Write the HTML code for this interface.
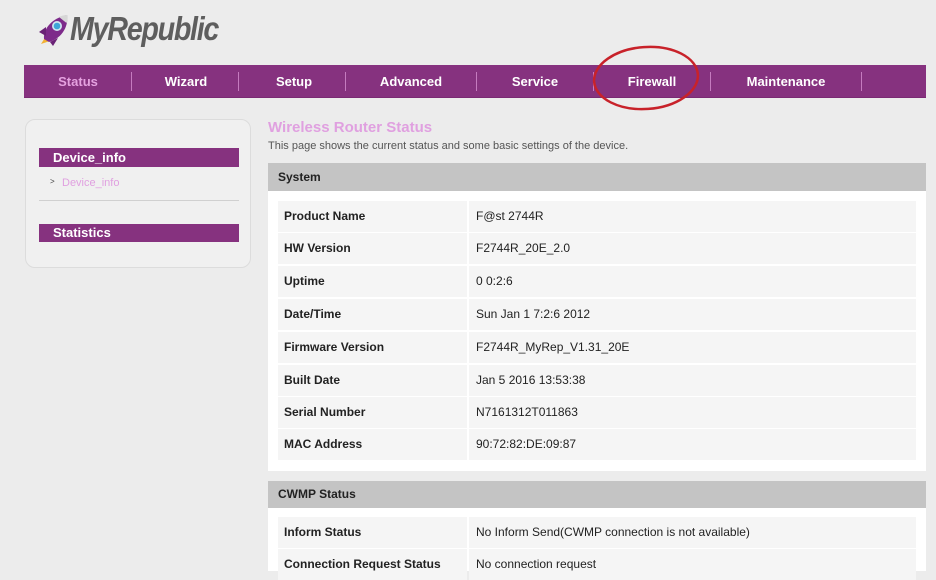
<!DOCTYPE html>
<html><head><meta charset="utf-8"><style>
*{margin:0;padding:0;box-sizing:border-box}
body{width:936px;height:566px;overflow:hidden;background:#ececec;font-family:"Liberation Sans",Arial,sans-serif;position:relative}
.abs{position:absolute}
.nav{left:24px;top:65px;width:902px;height:33px;background:#86327f;border-bottom:1px solid #7a2a73}
.nav span{position:absolute;top:0;line-height:33px;color:#fff;font-weight:bold;font-size:13px;transform:translateX(-50%)}
.sep{position:absolute;top:7px;width:1px;height:19px;background:#c57bbf}
.side{left:25px;top:119px;width:226px;height:149px;background:#f0f0f0;border:1px solid #dcdcdc;border-radius:10px}
.hd{position:absolute;left:13px;width:200px;height:19px;background:#86327f;color:#fff;font-weight:bold;font-size:13px;line-height:19px;padding-left:14px}
.panel{left:268px;width:658px;background:#fff}
.ph{height:28px;background:#c4c4c4;font-weight:bold;font-size:12px;line-height:28px;padding-left:10px;color:#222}
.row{position:absolute;left:10px;width:638px;height:31px;font-size:12px;line-height:31px;color:#222}
.row .l{position:absolute;left:0;width:189px;height:31px;background:#f5f5f5;padding-left:6px;font-weight:bold}
.row .v{position:absolute;left:191px;right:0;height:31px;background:#f5f5f5;padding-left:7px}
</style></head><body>
<svg class="abs" style="left:38px;top:12px" width="34" height="34" viewBox="0 0 34 34">
<path d="M3 32 L8 24 L12 29 Z" fill="#f2b234"/>
<path d="M6 27 C5 17 14 6 29 3 C31 16 22 27 11 30 Z" fill="#7d2a8a"/>
<path d="M1 20 L8 15 L8 24 Z" fill="#6a2276"/>
<path d="M12 30 L15 34 L20 26 Z" fill="#6a2276"/>
<circle cx="19" cy="14" r="5" fill="#cfe6f0"/><circle cx="19" cy="14" r="3.3" fill="#3ea6d8"/>
<path d="M21 5 C25 3 28 3 29.5 3 C30 6 29.5 9 28.5 11 Z" fill="#d7d7d7"/>
</svg>
<div class="abs" style="left:70px;top:10px;font-size:33px;font-weight:bold;font-style:italic;color:#5e5e5e;letter-spacing:-1.5px;transform:scaleX(0.87);transform-origin:left">MyRepublic</div>

<div class="abs nav">
<span style="left:54px;color:#e5a2e0">Status</span>
<span style="left:162px">Wizard</span>
<span style="left:270px">Setup</span>
<span style="left:387px">Advanced</span>
<span style="left:511px">Service</span>
<span style="left:628px">Firewall</span>
<span style="left:762px">Maintenance</span>
<div class="sep" style="left:107px"></div><div class="sep" style="left:214px"></div><div class="sep" style="left:321px"></div><div class="sep" style="left:452px"></div><div class="sep" style="left:569px"></div><div class="sep" style="left:686px"></div><div class="sep" style="left:837px"></div>
</div>
<svg class="abs" style="left:590px;top:42px" width="112" height="72"><ellipse cx="56" cy="36" rx="52" ry="31" fill="none" stroke="#c8222a" stroke-width="2.5" transform="rotate(-4 56 36)"/></svg>

<div class="abs side">
<div class="hd" style="top:28px">Device_info</div>
<div class="abs" style="left:24px;top:57px;font-size:8px;color:#444">&gt;</div>
<div class="abs" style="left:36px;top:57px;font-size:11px;color:#e0a0e0">Device_info</div>
<div class="abs" style="left:13px;top:80px;width:200px;height:1px;background:#d0d0d0"></div>
<div class="hd" style="top:104px;height:18px;line-height:18px">Statistics</div>
</div>

<div class="abs" style="left:268px;top:119px;font-size:15px;font-weight:bold;color:#e0a0e0">Wireless Router Status</div>
<div class="abs" style="left:268px;top:140px;font-size:11px;color:#555">This page shows the current status and some basic settings of the device.</div>

<div class="abs panel" style="top:163px;height:308px">
<div class="ph">System</div>
<div class="row" style="top:38px"><div class="l">Product Name</div><div class="v">F@st 2744R</div></div>
<div class="row" style="top:70px"><div class="l">HW Version</div><div class="v">F2744R_20E_2.0</div></div>
<div class="row" style="top:103px"><div class="l">Uptime</div><div class="v">0 0:2:6</div></div>
<div class="row" style="top:136px"><div class="l">Date/Time</div><div class="v">Sun Jan 1 7:2:6 2012</div></div>
<div class="row" style="top:169px"><div class="l">Firmware Version</div><div class="v">F2744R_MyRep_V1.31_20E</div></div>
<div class="row" style="top:202px"><div class="l">Built Date</div><div class="v">Jan 5 2016 13:53:38</div></div>
<div class="row" style="top:234px"><div class="l">Serial Number</div><div class="v">N7161312T011863</div></div>
<div class="row" style="top:266px"><div class="l">MAC Address</div><div class="v">90:72:82:DE:09:87</div></div>
</div>

<div class="abs panel" style="top:481px;height:90px">
<div class="ph" style="height:27px;line-height:27px">CWMP Status</div>
<div class="row" style="top:36px"><div class="l">Inform Status</div><div class="v">No Inform Send(CWMP connection is not available)</div></div>
<div class="row" style="top:68px"><div class="l">Connection Request Status</div><div class="v">No connection request</div></div>
</div>
</body></html>
